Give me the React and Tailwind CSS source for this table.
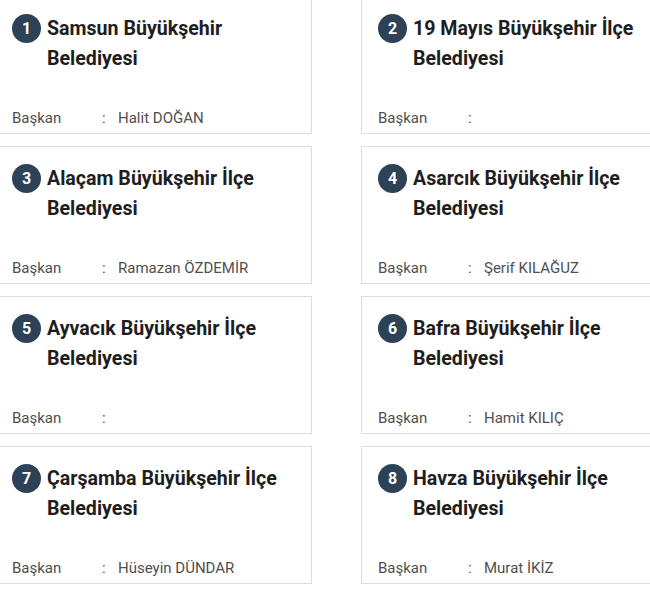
import React from "react";

const items = [
  { n: 1, title: "Samsun Büyükşehir Belediyesi", name: "Halit DOĞAN" },
  { n: 2, title: "19 Mayıs Büyükşehir İlçe Belediyesi", name: "" },
  { n: 3, title: "Alaçam Büyükşehir İlçe Belediyesi", name: "Ramazan ÖZDEMİR" },
  { n: 4, title: "Asarcık Büyükşehir İlçe Belediyesi", name: "Şerif KILAĞUZ" },
  { n: 5, title: "Ayvacık Büyükşehir İlçe Belediyesi", name: "" },
  { n: 6, title: "Bafra Büyükşehir İlçe Belediyesi", name: "Hamit KILIÇ" },
  { n: 7, title: "Çarşamba Büyükşehir İlçe Belediyesi", name: "Hüseyin DÜNDAR" },
  { n: 8, title: "Havza Büyükşehir İlçe Belediyesi", name: "Murat İKİZ" },
];

function Card({ n, title, name }) {
  return (
    <div className="h-[138px] border border-[#dedede] bg-white flex flex-col px-4 pt-[17px] pb-[4px]">
      <div className="flex items-start gap-[6px]">
        <div className="shrink-0 w-[29px] h-[29px] rounded-full bg-[#2e4257] text-white flex items-center justify-center text-[16px] font-bold leading-none">
          {n}
        </div>
        <div className="text-[19.6px] font-bold leading-[30px] text-[#1e1e1e]">{title}</div>
      </div>
      <div className="mt-auto flex items-center text-[15px] leading-[22px] text-[#4f4f4f]">
        <span className="w-[90px]">Başkan</span>
        <span className="w-[16px]">:</span>
        <span>{name}</span>
      </div>
    </div>
  );
}

export default function App() {
  return (
    <div
      className="w-[650px] h-[594px] overflow-hidden bg-white"
      style={{ fontFamily: "Roboto, 'Noto Sans', sans-serif" }}
    >
      <div className="-mt-[4px] -ml-[5px] grid grid-cols-[317px_317px] gap-x-[49px] gap-y-[12px]">
        {items.map((it) => (
          <Card key={it.n} {...it} />
        ))}
      </div>
    </div>
  );
}
